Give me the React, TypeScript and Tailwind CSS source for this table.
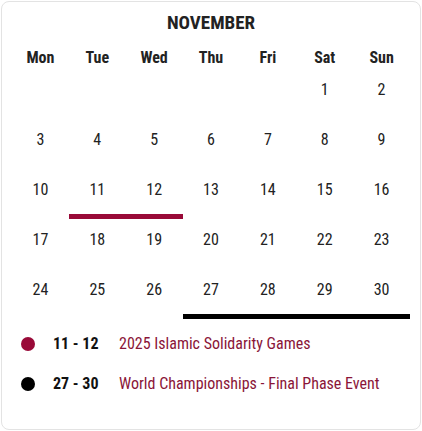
import React from 'react';

const weekDays = ['Mon', 'Tue', 'Wed', 'Thu', 'Fri', 'Sat', 'Sun'];

// November 2025 starts on a Saturday
const cells: (number | null)[] = [null, null, null, null, null, ...Array.from({ length: 30 }, (_, i) => i + 1)];

const events = [
  { from: 11, to: 12, title: '2025 Islamic Solidarity Games', dot: 'bg-[#990a38]', bar: 'bg-[#990a38]' },
  { from: 27, to: 30, title: 'World Championships - Final Phase Event', dot: 'bg-black', bar: 'bg-black' },
];

function barFor(day: number | null) {
  if (day === null) return null;
  const ev = events.find((e) => day >= e.from && day <= e.to);
  return ev ? ev.bar : null;
}

export default function App() {
  return (
    <div className="p-px bg-white" style={{ fontFamily: '"Roboto Condensed", Roboto, "Liberation Sans", sans-serif' }}>
      <div className="w-[420px] h-[429px] rounded-lg border border-[#e3e3e3] bg-white px-[10px] text-[#222]">
        {/* Month title */}
        <div className="mt-[9px] h-6 text-center text-[19px] font-bold leading-6">NOVEMBER</div>

        {/* Weekday header */}
        <div className="mt-3 grid grid-cols-7">
          {weekDays.map((d) => (
            <div key={d} className="h-[22px] text-center text-base font-bold leading-[22px]">
              {d}
            </div>
          ))}
        </div>

        {/* Days grid */}
        <div className="grid grid-cols-7">
          {cells.map((day, i) => {
            const bar = barFor(day);
            return (
              <div key={i} className="flex h-[50px] flex-col">
                <div className="h-[41px] text-center text-base leading-[41px]">{day ?? ''}</div>
                <div className={`mt-1 h-[5px] ${bar ?? ''}`} />
              </div>
            );
          })}
        </div>

        {/* Legend */}
        <div className="mt-[5px] flex flex-col">
          {events.map((e) => (
            <div key={e.title} className="flex h-10 items-center text-base">
              <span className={`ml-[9px] h-[14px] w-[14px] rounded-full ${e.dot}`} />
              <span className="ml-[18px] w-[66px] font-bold text-[#111]">
                {e.from} - {e.to}
              </span>
              <span className="text-[#8a1538]">{e.title}</span>
            </div>
          ))}
        </div>
      </div>
    </div>
  );
}
